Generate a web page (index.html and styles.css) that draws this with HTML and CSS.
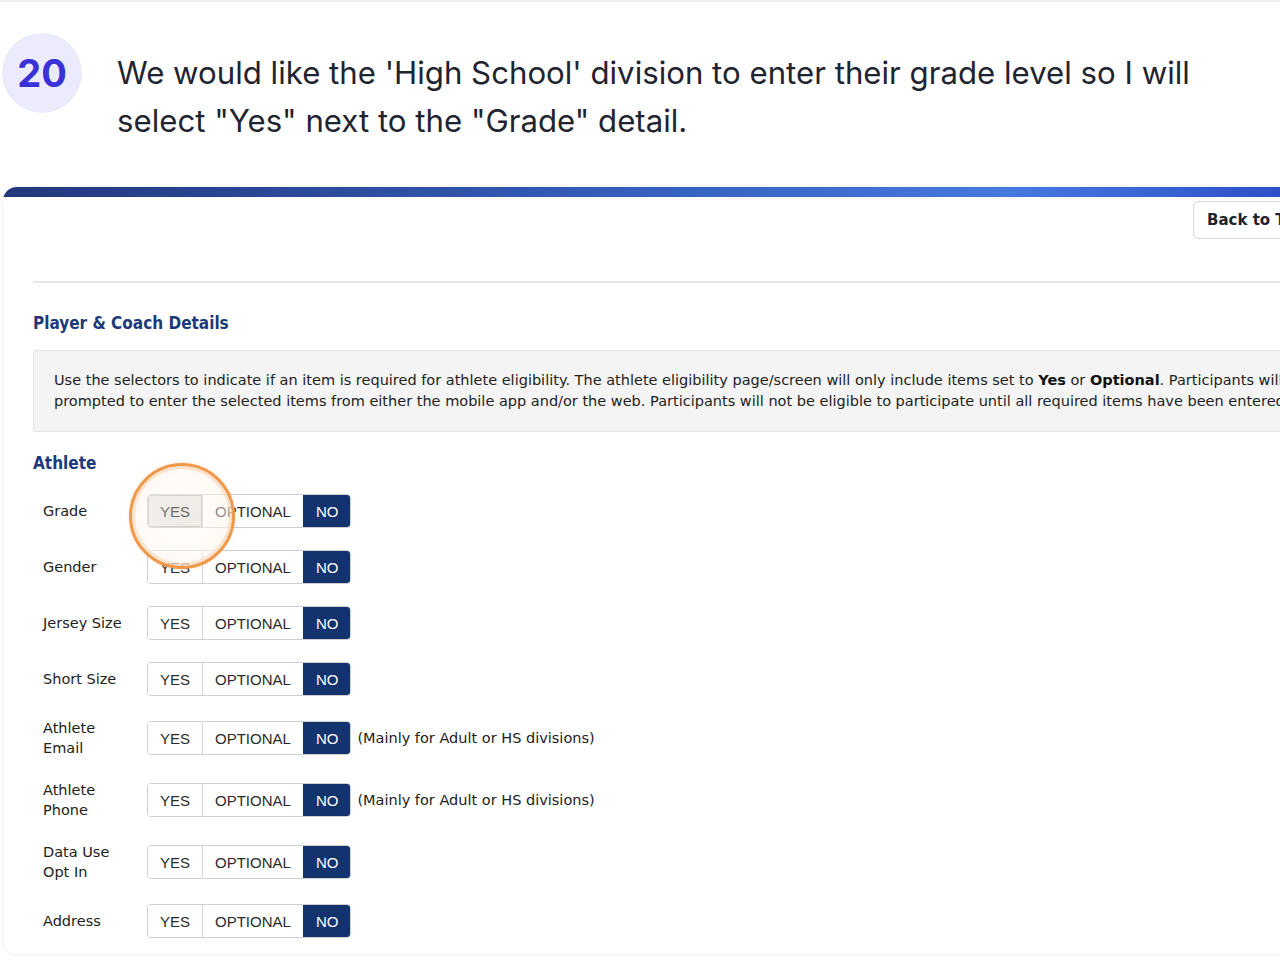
FILE: index.html
```html
<!DOCTYPE html>
<html>
<head>
<meta charset="utf-8">
<link rel="stylesheet" href="styles.css">
</head>
<body>
<div class="topline"></div>
<header class="step">
  <div class="badge">20</div>
  <p class="step-text">We would like the 'High School' division to enter their grade level so I will select "Yes" next to the "Grade" detail.</p>
</header>

<section class="card">
  <div class="card-bar"></div>
  <div class="card-body">
    <div class="toolbar">
      <button class="back-btn">Back to Tournament Settings</button>
    </div>
    <hr class="divider">
    <h2 class="section-title">Player &amp; Coach Details</h2>
    <div class="info">Use the selectors to indicate if an item is required for athlete eligibility. The athlete eligibility page/screen will only include items set to <b>Yes</b> or <b>Optional</b>. Participants will be<br>prompted to enter the selected items from either the mobile app and/or the web. Participants will not be eligible to participate until all required items have been entered.</div>
    <h3 class="group-title">Athlete</h3>

    <div class="rows">
      <div class="row">
        <div class="label">Grade</div>
        <div class="toggle"><span class="seg seg-yes hover">YES</span><span class="seg">OPTIONAL</span><span class="seg on">NO</span></div>
        <div class="highlight"></div>
      </div>
      <div class="row">
        <div class="label">Gender</div>
        <div class="toggle"><span class="seg seg-yes">YES</span><span class="seg">OPTIONAL</span><span class="seg on">NO</span></div>
      </div>
      <div class="row">
        <div class="label">Jersey Size</div>
        <div class="toggle"><span class="seg seg-yes">YES</span><span class="seg">OPTIONAL</span><span class="seg on">NO</span></div>
      </div>
      <div class="row">
        <div class="label">Short Size</div>
        <div class="toggle"><span class="seg seg-yes">YES</span><span class="seg">OPTIONAL</span><span class="seg on">NO</span></div>
      </div>
      <div class="row">
        <div class="label">Athlete Email</div>
        <div class="toggle"><span class="seg seg-yes">YES</span><span class="seg">OPTIONAL</span><span class="seg on">NO</span></div>
        <div class="note">(Mainly for Adult or HS divisions)</div>
      </div>
      <div class="row">
        <div class="label">Athlete Phone</div>
        <div class="toggle"><span class="seg seg-yes">YES</span><span class="seg">OPTIONAL</span><span class="seg on">NO</span></div>
        <div class="note">(Mainly for Adult or HS divisions)</div>
      </div>
      <div class="row">
        <div class="label">Data Use Opt In</div>
        <div class="toggle"><span class="seg seg-yes">YES</span><span class="seg">OPTIONAL</span><span class="seg on">NO</span></div>
      </div>
      <div class="row">
        <div class="label">Address</div>
        <div class="toggle"><span class="seg seg-yes">YES</span><span class="seg">OPTIONAL</span><span class="seg on">NO</span></div>
      </div>
    </div>
  </div>
</section>
</body>
</html>
```

FILE: styles.css
```css
html, body {
  margin: 0;
  padding: 0;
  background: #ffffff;
  overflow: hidden;
}
body {
  width: 1280px;
  height: 978px;
  font-family: "DejaVu Sans", Verdana, sans-serif;
  color: #222;
}
.topline {
  height: 2px;
  background: #efefef;
}
.step {
  display: flex;
  align-items: flex-start;
  padding-top: 31px;
  padding-left: 2px;
}
.badge {
  width: 80px;
  height: 80px;
  border-radius: 50%;
  background: #ebebfc;
  color: #3a32d6;
  font-family: Inter, "Liberation Sans", sans-serif;
  font-weight: 700;
  font-size: 38px;
  display: flex;
  align-items: center;
  justify-content: center;
  flex-shrink: 0;
}
.step-text {
  margin: 16px 40px 0 35px;
  font-family: Inter, "Liberation Sans", sans-serif;
  font-size: 31.2px;
  line-height: 48px;
  color: #1f2430;
}
.card {
  margin-top: 42px;
  margin-left: 3px;
  width: 1480px;
  background: #fff;
  border-radius: 14px;
  box-shadow: 0 0 3px rgba(0,0,0,0.12);
  overflow: hidden;
}
.card-bar {
  height: 10px;
  background: linear-gradient(90deg, #22387c 0%, #3257b0 35%, #4679df 68%, #2c4cc6 88%, #2a47c0 100%);
}
.card-body {
  padding: 0 0 16px 30px;
}
.toolbar {
  display: flex;
  justify-content: flex-start;
  padding-top: 4px;
  padding-left: 1160px;
}
.back-btn {
  height: 38px;
  padding: 0 13px;
  border: 1px solid #d9d9de;
  border-radius: 6px;
  background: #fff;
  font-family: "DejaVu Sans", Verdana, sans-serif;
  font-weight: 700;
  font-size: 15px;
  color: #1d2330;
  white-space: nowrap;
}
.divider {
  margin: 42px 0 0 0;
  border: 0;
  height: 2px;
  background: #e6e6e6;
}
.section-title {
  margin: 29px 0 0 0;
  font-family: "DejaVu Sans Condensed", "DejaVu Sans", sans-serif;
  font-size: 17px;
  line-height: 22px;
  font-weight: 700;
  color: #1b3a7a;
}
.info {
  margin-top: 16px;
  background: #f4f4f4;
  border: 1px solid #e2e2e2;
  border-radius: 3px;
  padding: 19px 20px;
  font-size: 14.5px;
  line-height: 21px;
  color: #222;
  white-space: nowrap;
  overflow: hidden;
}
.info b { color: #111; }
.group-title {
  margin: 20px 0 0 0;
  font-family: "DejaVu Sans Condensed", "DejaVu Sans", sans-serif;
  font-size: 17px;
  line-height: 22px;
  font-weight: 700;
  color: #1b3a7a;
}
.rows {
  margin-top: 20px;
  display: flex;
  flex-direction: column;
  gap: 22px;
}
.row {
  position: relative;
  display: flex;
  align-items: center;
  min-height: 34px;
}
.label {
  flex-shrink: 0;
  width: 90px;
  padding: 0 14px 0 10px;
  font-size: 14.5px;
  line-height: 20px;
  color: #222;
}
.toggle {
  display: flex;
  height: 34px;
  border: 1px solid #cfcfcf;
  border-radius: 4px;
  overflow: hidden;
  box-sizing: border-box;
  font-family: "Liberation Sans", Arial, sans-serif;
  font-size: 15px;
  color: #2b2b2b;
}
.seg {
  display: flex;
  align-items: center;
  padding: 0 12px;
  background: #fff;
}
.seg + .seg { border-left: 1px solid #d6d6d6; }
.seg.hover {
  background: #e8e6e3;
  box-shadow: inset 0 0 0 1px #bdbab5;
}
.seg.on {
  background: #12336e;
  color: #fff;
  border-left-color: #12336e;
}
.note {
  margin-left: 6px;
  font-size: 14.5px;
  color: #222;
}
.highlight {
  position: absolute;
  z-index: 5;
  left: 96px;
  top: -31px;
  width: 100px;
  height: 100px;
  border-radius: 50%;
  border: 3px solid #f0984a;
  background: radial-gradient(circle, rgba(255,250,246,0.25) 0%, rgba(255,246,238,0.5) 60%, rgba(253,238,224,0.85) 100%);
  box-shadow: inset 0 0 0 3px rgba(247,200,160,0.45), 0 0 3px rgba(240,152,74,0.35);
}
```
